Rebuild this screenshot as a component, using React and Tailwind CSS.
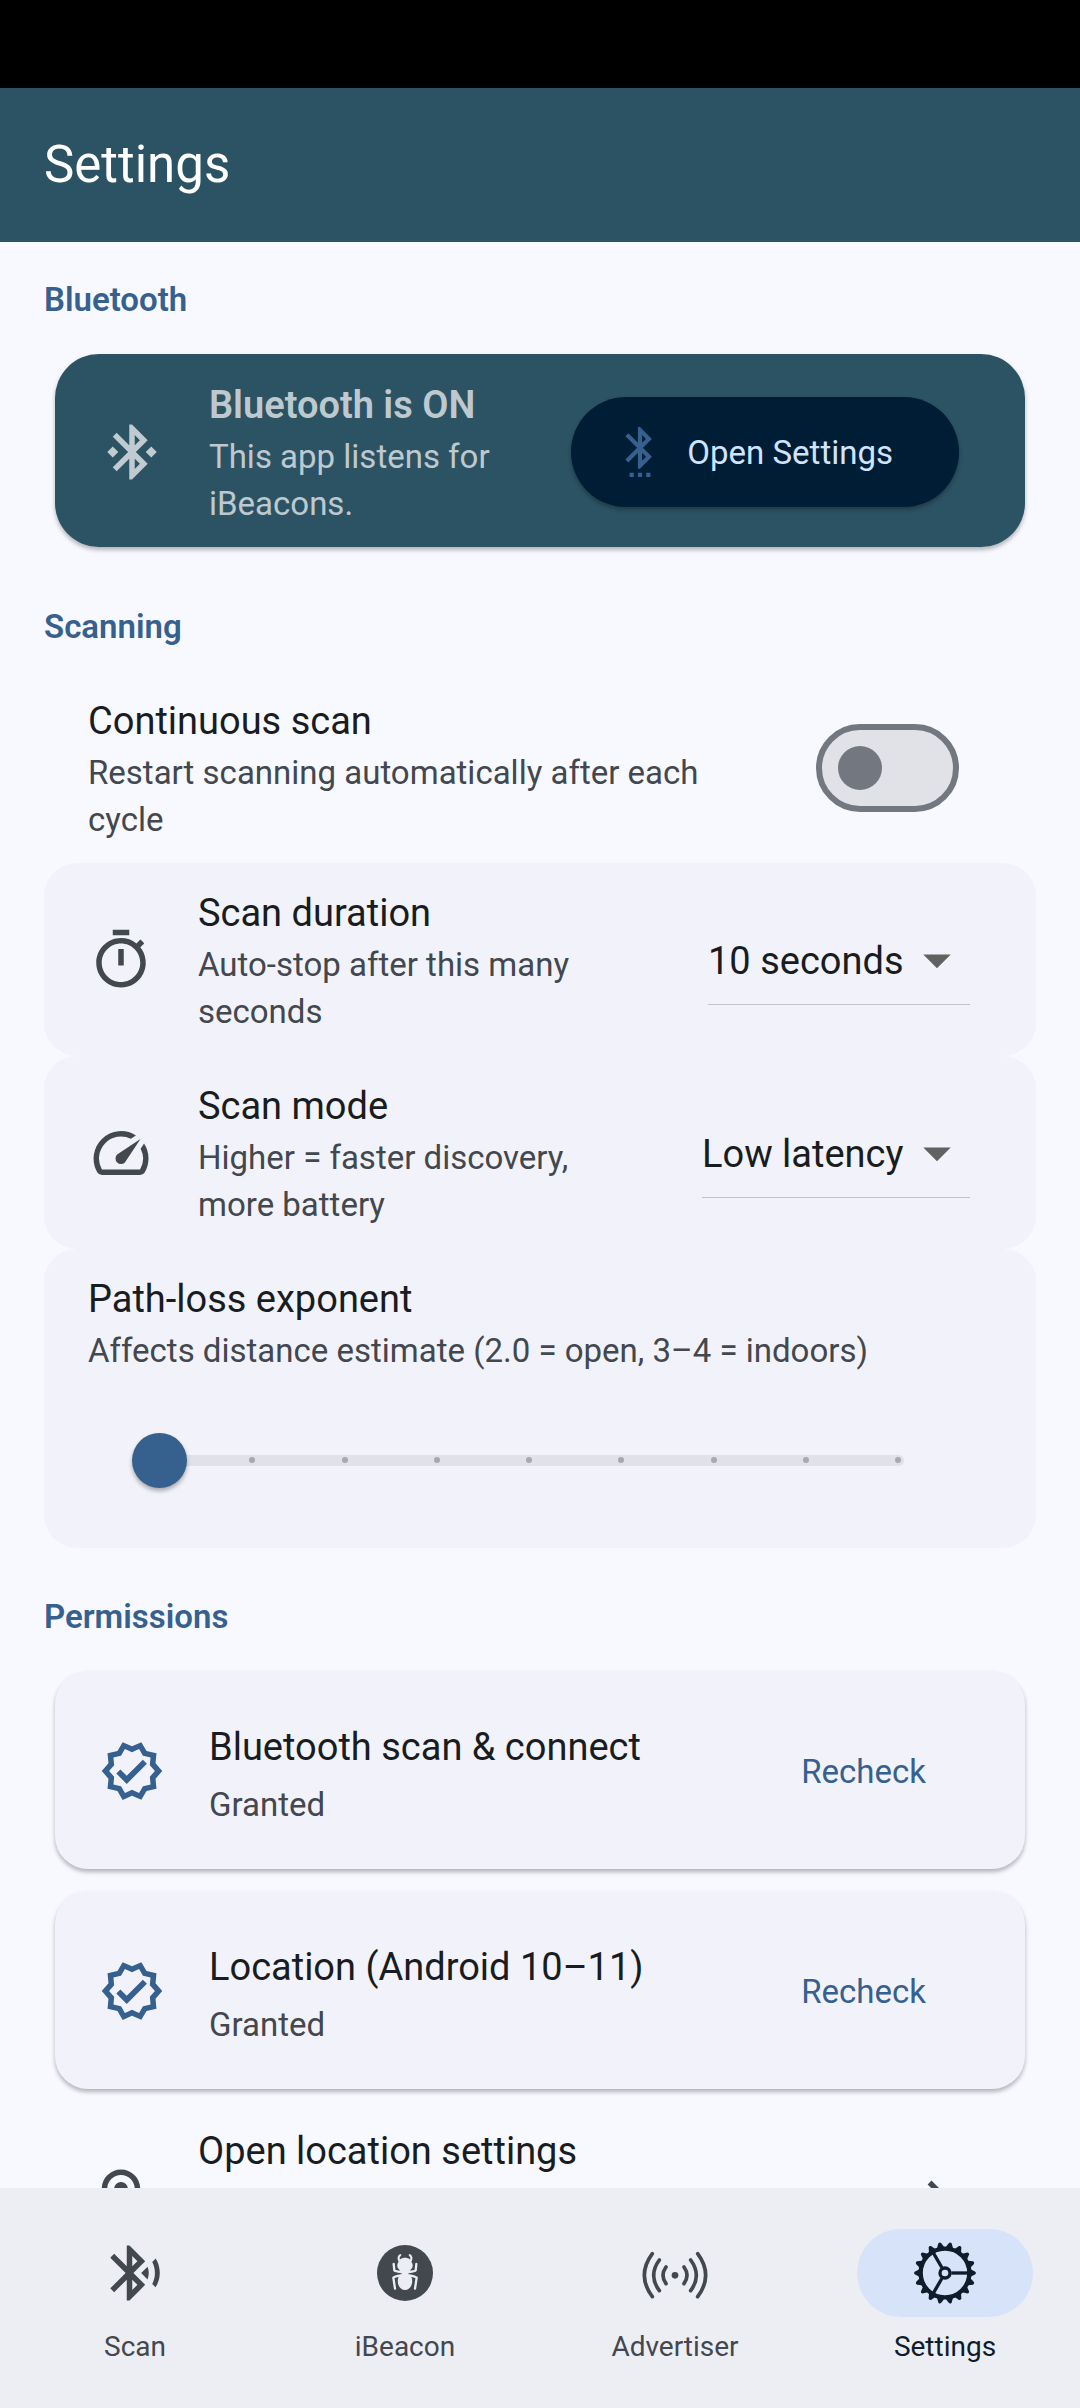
import React, { useState } from "react";
import {
  MdBluetoothConnected,
  MdSettingsBluetooth,
  MdOutlineTimer,
  MdSpeed,
  MdOutlineVerified,
  MdOutlineLocationOn,
  MdChevronRight,
  MdArrowDropDown,
  MdBluetoothSearching,
} from "react-icons/md";

const TITLE = "text-[38px] leading-[56px]";
const BODY = "text-[33px] leading-[47px]";

function SectionHeading({ children, first }) {
  return (
    <h2
      className={
        (first ? "pt-[35px]" : "pt-[46px]") +
        " pb-[20px] text-[33px] leading-[46px] font-semibold text-[#36618e]"
      }
    >
      {children}
    </h2>
  );
}

function SelectTile({ id, icon: Icon, title, text, options, value, onChange }) {
  return (
    <div className="flex items-center gap-[44px] rounded-[33px] bg-[#f2f3fa] pt-[22px] pb-[21px] pl-[44px] pr-[66px]">
      <Icon className="size-[66px] shrink-0 text-[#43474e]" />
      <div className="min-w-0 flex-1">
        <label htmlFor={id} className={"block text-[#191c20] " + TITLE}>{title}</label>
        <p className={"max-w-[430px] text-[#43474e] " + BODY}>{text}</p>
      </div>
      <div className="relative shrink-0">
        <select
          id={id}
          value={value}
          onChange={(e) => onChange(e.target.value)}
          className="block h-[89px] appearance-none border-b border-[#c4c4c8] bg-transparent pt-[4px] pr-[66px] text-[38px] text-[#191c20] outline-none"
        >
          {options.map((o) => (
            <option key={o}>{o}</option>
          ))}
        </select>
        <MdArrowDropDown className="pointer-events-none absolute right-0 top-[11px] size-[66px] text-[#616161]" />
      </div>
    </div>
  );
}

function PermissionCard({ title }) {
  return (
    <div className="mx-[11px] flex min-h-[198px] items-center gap-[44px] rounded-[33px] bg-[#f2f3fa] pt-[2px] pl-[44px] pr-[66px] shadow-[0_3px_4px_rgba(0,0,0,0.28)]">
      <MdOutlineVerified className="size-[66px] shrink-0 text-[#36618e]" />
      <div className="flex min-w-0 flex-1 flex-col gap-[6px] pt-[4px]">
        <h3 className={"text-[#191c20] " + TITLE}>{title}</h3>
        <p className={"text-[#43474e] " + BODY}>Granted</p>
      </div>
      <button type="button" className={"rounded-full px-[33px] py-[22px] text-[#36618e] " + BODY}>
        Recheck
      </button>
    </div>
  );
}

function SearchingIcon() {
  return <MdBluetoothSearching className="size-[66px]" />;
}

function AntIcon() {
  return (
    <svg viewBox="21 18 198 198" className="size-[66px]" aria-hidden="true">
      <circle cx="120" cy="117" r="84" fill="currentColor" />
      <g fill="#eceef4">
        <path d="M120 71C132 71 139 78 140 85C145 91 144 101 138 106C136 110 131 114 130 118C131 122 136 124 139 129C146 141 140 168 120 168C100 168 94 141 101 129C104 124 109 122 110 118C109 114 104 110 102 106C96 101 95 91 100 85C101 78 108 71 120 71Z" />
      </g>
      <g fill="none" stroke="#eceef4" strokeWidth="7" strokeLinecap="round" strokeLinejoin="round">
        <path d="M106 63Q98 69 102 79M134 63Q142 69 138 79" strokeWidth="6" />
        <path d="M86 90L88 109Q90 112 109 114M154 90L152 109Q150 112 131 114" />
        <path d="M108 124Q88 127 85 131L90 164M132 124Q152 127 155 131L150 164" />
      </g>
    </svg>
  );
}

function WavesIcon() {
  return (
    <svg
      viewBox="36 18 198 198"
      className="size-[66px]"
      fill="none"
      stroke="currentColor"
      strokeWidth="11"
      strokeLinecap="round"
      aria-hidden="true"
    >
      <circle cx="135" cy="124" r="10" fill="currentColor" stroke="none" />
      <path d="M108 99Q90 124 108 149M88 78Q54 124 88 170M67 59Q19 124 67 188" />
      <path d="M162 99Q180 124 162 149M182 78Q216 124 182 170M203 59Q251 124 203 188" />
    </svg>
  );
}

function GearIcon() {
  const teeth = Array.from({ length: 18 }, (_, i) => i * 20);
  return (
    <svg viewBox="36 18 198 198" className="size-[66px]" fill="none" stroke="currentColor" aria-hidden="true">
      <circle cx="135" cy="117" r="73" strokeWidth="13" />
      <circle cx="135" cy="117" r="15" strokeWidth="10" />
      {[0, 120, 240].map((a) => (
        <path key={a} d="M154 117H204" strokeWidth="10" transform={`rotate(${a} 135 117)`} />
      ))}
      {teeth.map((a) => (
        <path
          key={a}
          d="M212 106L226 113Q230 117 226 121L212 128Z"
          fill="currentColor"
          stroke="none"
          transform={`rotate(${a} 135 117)`}
        />
      ))}
    </svg>
  );
}

const TABS = [
  { label: "Scan", Icon: SearchingIcon },
  { label: "iBeacon", Icon: AntIcon },
  { label: "Advertiser", Icon: WavesIcon },
  { label: "Settings", Icon: GearIcon },
];

export default function App() {
  const [continuous, setContinuous] = useState(false);
  const [duration, setDuration] = useState("10 seconds");
  const [mode, setMode] = useState("Low latency");
  const [exponent, setExponent] = useState(2);
  const [tab, setTab] = useState("Settings");

  return (
    <div className="flex h-screen flex-col overflow-hidden bg-[#f8f9ff] font-[Roboto,sans-serif]">
      <div className="h-[88px] shrink-0 bg-black" />
      <header className="flex h-[154px] shrink-0 items-center bg-[#2c5364] px-[44px]">
        <h1 className="text-[51px] leading-[64px] text-white">Settings</h1>
      </header>

      <main className="min-h-0 flex-1 overflow-hidden px-[44px]">
        <SectionHeading first>Bluetooth</SectionHeading>
        <div className="mx-[11px] my-[11px] flex items-center gap-[44px] rounded-[44px] bg-[#2c5364] pt-[23px] pb-[20px] pl-[44px] pr-[66px] text-white/70 shadow-[0_3px_4px_rgba(0,0,0,0.28)]">
          <MdBluetoothConnected className="size-[66px] shrink-0" />
          <div className="min-w-0 flex-1">
            <h3 className={"font-semibold " + TITLE}>Bluetooth is ON</h3>
            <p className={BODY}>This app listens for iBeacons.</p>
          </div>
          <button
            type="button"
            className="flex h-[110px] shrink-0 items-center gap-[22px] rounded-full bg-[#001d36] pl-[44px] pr-[66px] text-[33px] leading-[47px] text-[#d1e4ff] shadow-[0_3px_4px_rgba(0,0,0,0.28)]"
          >
            <MdSettingsBluetooth className="size-[50px] text-[#36618e]" />
            Open Settings
          </button>
        </div>

        <SectionHeading>Scanning</SectionHeading>
        <label className="flex items-center gap-[44px] pt-[23px] pb-[20px] pl-[44px] pr-[77px]">
          <span className="min-w-0 flex-1">
            <span className={"block text-[#191c20] " + TITLE}>Continuous scan</span>
            <span className={"block text-[#43474e] " + BODY}>
              Restart scanning automatically after each cycle
            </span>
          </span>
          <input
            type="checkbox"
            role="switch"
            checked={continuous}
            onChange={(e) => setContinuous(e.target.checked)}
            className="ml-[11px] flex h-[88px] w-[143px] shrink-0 appearance-none items-center rounded-full border-[6px] border-[#73777f] bg-[#e1e2e8] px-[16px] before:size-[44px] before:rounded-full before:bg-[#73777f] checked:justify-end checked:border-[#36618e] checked:bg-[#36618e] checked:before:bg-white"
          />
        </label>

        <SelectTile
          id="duration"
          icon={MdOutlineTimer}
          title="Scan duration"
          text="Auto-stop after this many seconds"
          options={["5 seconds", "10 seconds", "20 seconds"]}
          value={duration}
          onChange={setDuration}
        />
        <SelectTile
          id="mode"
          icon={MdSpeed}
          title="Scan mode"
          text="Higher = faster discovery, more battery"
          options={["Low power", "Balanced", "Low latency"]}
          value={mode}
          onChange={setMode}
        />

        <div className="rounded-[33px] bg-[#f2f3fa] py-[22px] pl-[44px] pr-[66px]">
          <label htmlFor="exponent" className={"block text-[#191c20] " + TITLE}>Path-loss exponent</label>
          <p className={"text-[#43474e] " + BODY}>Affects distance estimate (2.0 = open, 3–4 = indoors)</p>
          <div className="relative mx-[44px] mt-[20px] flex h-[132px] items-center">
            <div className="absolute inset-x-[22px] flex h-[11px] items-center justify-between rounded-full bg-[#e1e2e8] px-[3px]">
              {Array.from({ length: 9 }, (_, i) => (
                <span key={i} className="size-[6px] rounded-full bg-[#a7a9af]" />
              ))}
            </div>
            <input
              id="exponent"
              type="range"
              min="2"
              max="4"
              step="0.25"
              value={exponent}
              onChange={(e) => setExponent(Number(e.target.value))}
              className="relative h-[55px] w-full appearance-none bg-transparent outline-none [&::-webkit-slider-thumb]:size-[55px] [&::-webkit-slider-thumb]:appearance-none [&::-webkit-slider-thumb]:rounded-full [&::-webkit-slider-thumb]:bg-[#36618e] [&::-webkit-slider-thumb]:shadow-[0_3px_4px_rgba(0,0,0,0.3)]"
            />
          </div>
        </div>

        <SectionHeading>Permissions</SectionHeading>
        <div className="flex flex-col gap-[22px] py-[11px]">
          <PermissionCard title="Bluetooth scan &amp; connect" />
          <PermissionCard title="Location (Android 10–11)" />
        </div>

        <a href="#location" className="flex min-h-[193px] items-center gap-[44px] pl-[44px] pr-[66px] text-[#43474e]">
          <MdOutlineLocationOn className="size-[66px] shrink-0" />
          <span className={"flex-1 self-start pt-[23px] text-[#191c20] " + TITLE}>Open location settings</span>
          <MdChevronRight className="size-[66px] shrink-0" />
        </a>
      </main>

      <nav className="grid h-[220px] shrink-0 grid-cols-4 bg-[#eceef4] pt-[41px]">
        {TABS.map(({ label, Icon }) => {
          const active = label === tab;
          return (
            <button
              key={label}
              type="button"
              aria-current={active ? "page" : undefined}
              onClick={() => setTab(label)}
              className={"flex flex-col items-center gap-[11px] " + (active ? "text-[#101c2b]" : "text-[#43474e]")}
            >
              <span className={"flex h-[88px] w-[176px] items-center justify-center rounded-full " + (active ? "bg-[#d7e3f8]" : "")}>
                <Icon />
              </span>
              <span className="text-[28px] leading-[37px]">{label}</span>
            </button>
          );
        })}
      </nav>
    </div>
  );
}
